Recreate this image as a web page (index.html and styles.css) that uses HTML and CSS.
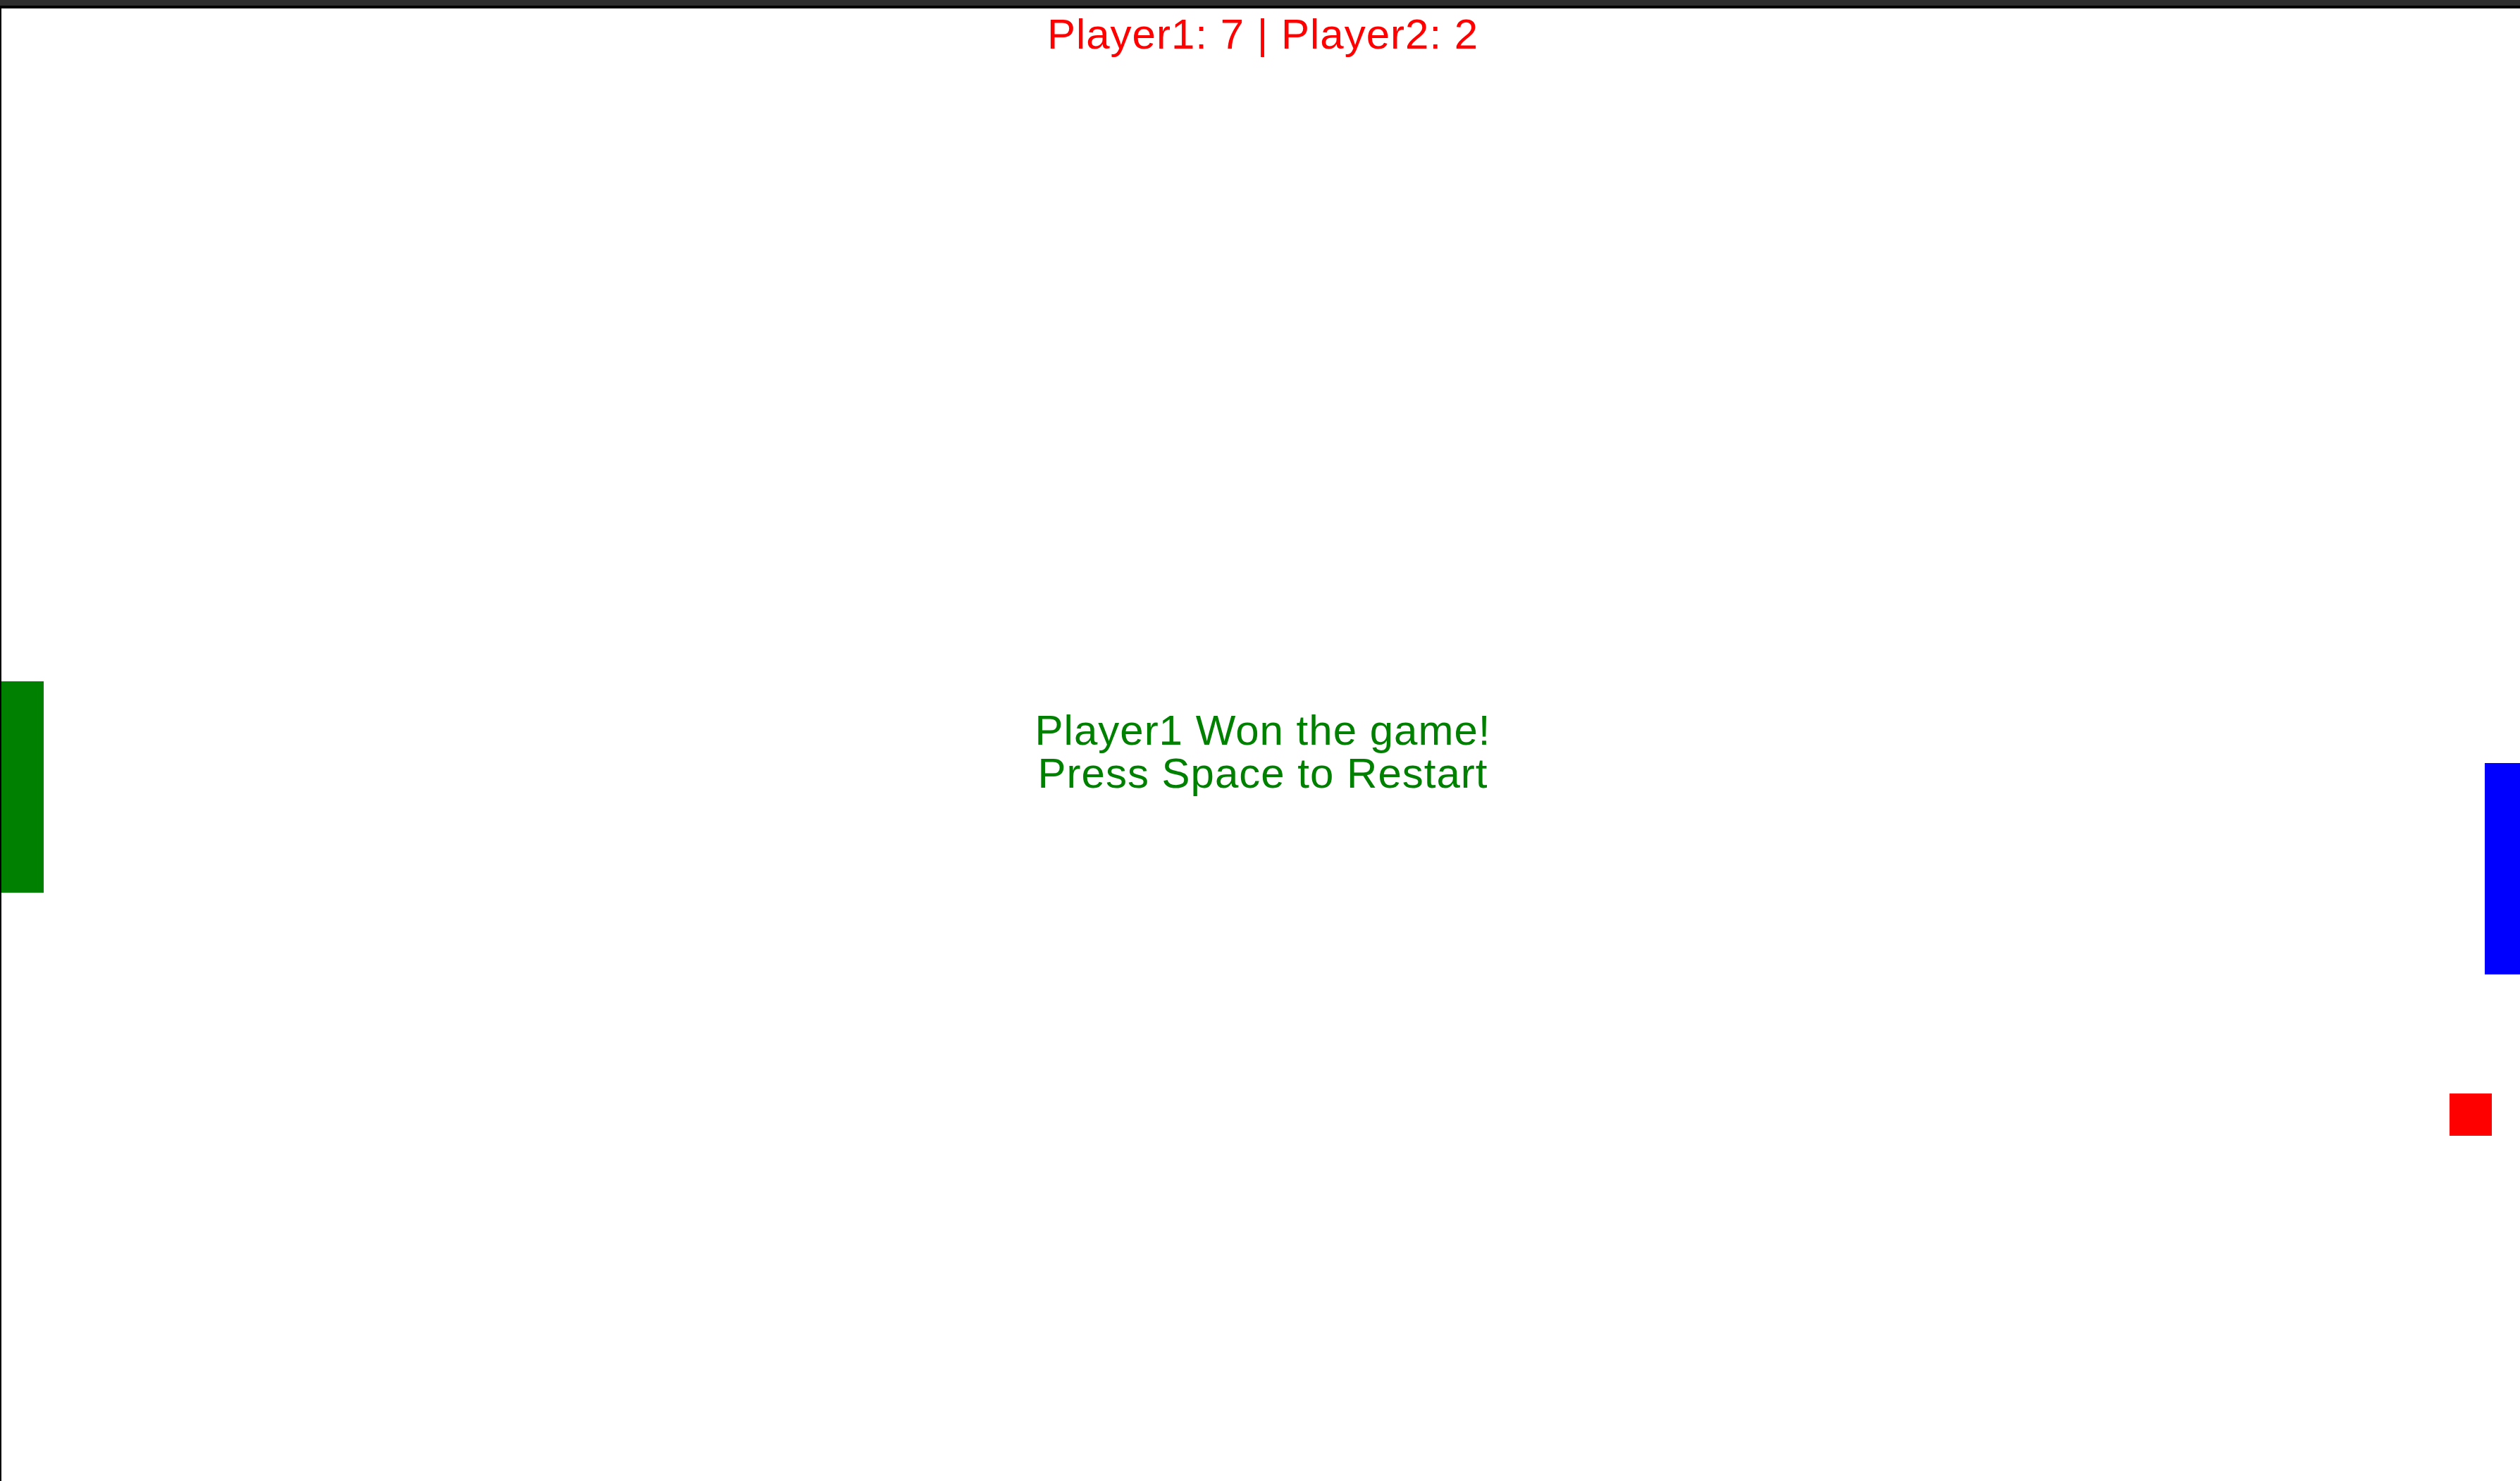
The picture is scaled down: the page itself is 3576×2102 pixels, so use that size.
FILE: index.html
```html
<!DOCTYPE html>
<html lang="en">
<head>
<meta charset="utf-8">
<title>Pong</title>
<link rel="stylesheet" href="styles.css">
</head>
<body>
<div class="topbar"></div>
<main class="court">
  <div class="score">Player1: 7 | Player2: 2</div>
  <div class="message">
    <p class="message-line">Player1 Won the game!</p>
    <p class="message-line">Press Space to Restart</p>
  </div>
  <div class="paddle paddle-left"></div>
  <div class="paddle paddle-right"></div>
  <div class="ball"></div>
</main>
</body>
</html>
```
FILE: styles.css
```css
html, body {
  margin: 0;
  padding: 0;
  overflow: hidden;
  background: #ffffff;
}

body {
  font-family: "Comic Sans MS", "Liberation Sans", Arial, sans-serif;
}

.topbar {
  height: 8px;
  background: #2f2f2f;
}

.court {
  position: relative;
  width: 3580px;
  height: 2090px;
  border-top: 4px solid #000000;
  border-left: 2px solid #000000;
  background: #ffffff;
  overflow: hidden;
  display: flex;
  flex-direction: column;
  align-items: center;
}

.score {
  margin-top: 7px;
  font-size: 60px;
  line-height: 60px;
  color: #ff0000;
  letter-spacing: 1px;
  white-space: nowrap;
}

.message {
  margin-top: 927px;
  display: flex;
  flex-direction: column;
  align-items: center;
}

.message-line {
  margin: 0;
  font-size: 60px;
  line-height: 61px;
  color: #008000;
  letter-spacing: 1px;
  white-space: nowrap;
}

.paddle {
  position: absolute;
  width: 60px;
  height: 300px;
}

.paddle-left {
  left: 0;
  top: 955px;
  background: #008000;
}

.paddle-right {
  left: 3524px;
  top: 1071px;
  background: #0000ff;
}

.ball {
  position: absolute;
  left: 3474px;
  top: 1540px;
  width: 60px;
  height: 60px;
  background: #ff0000;
}
```
